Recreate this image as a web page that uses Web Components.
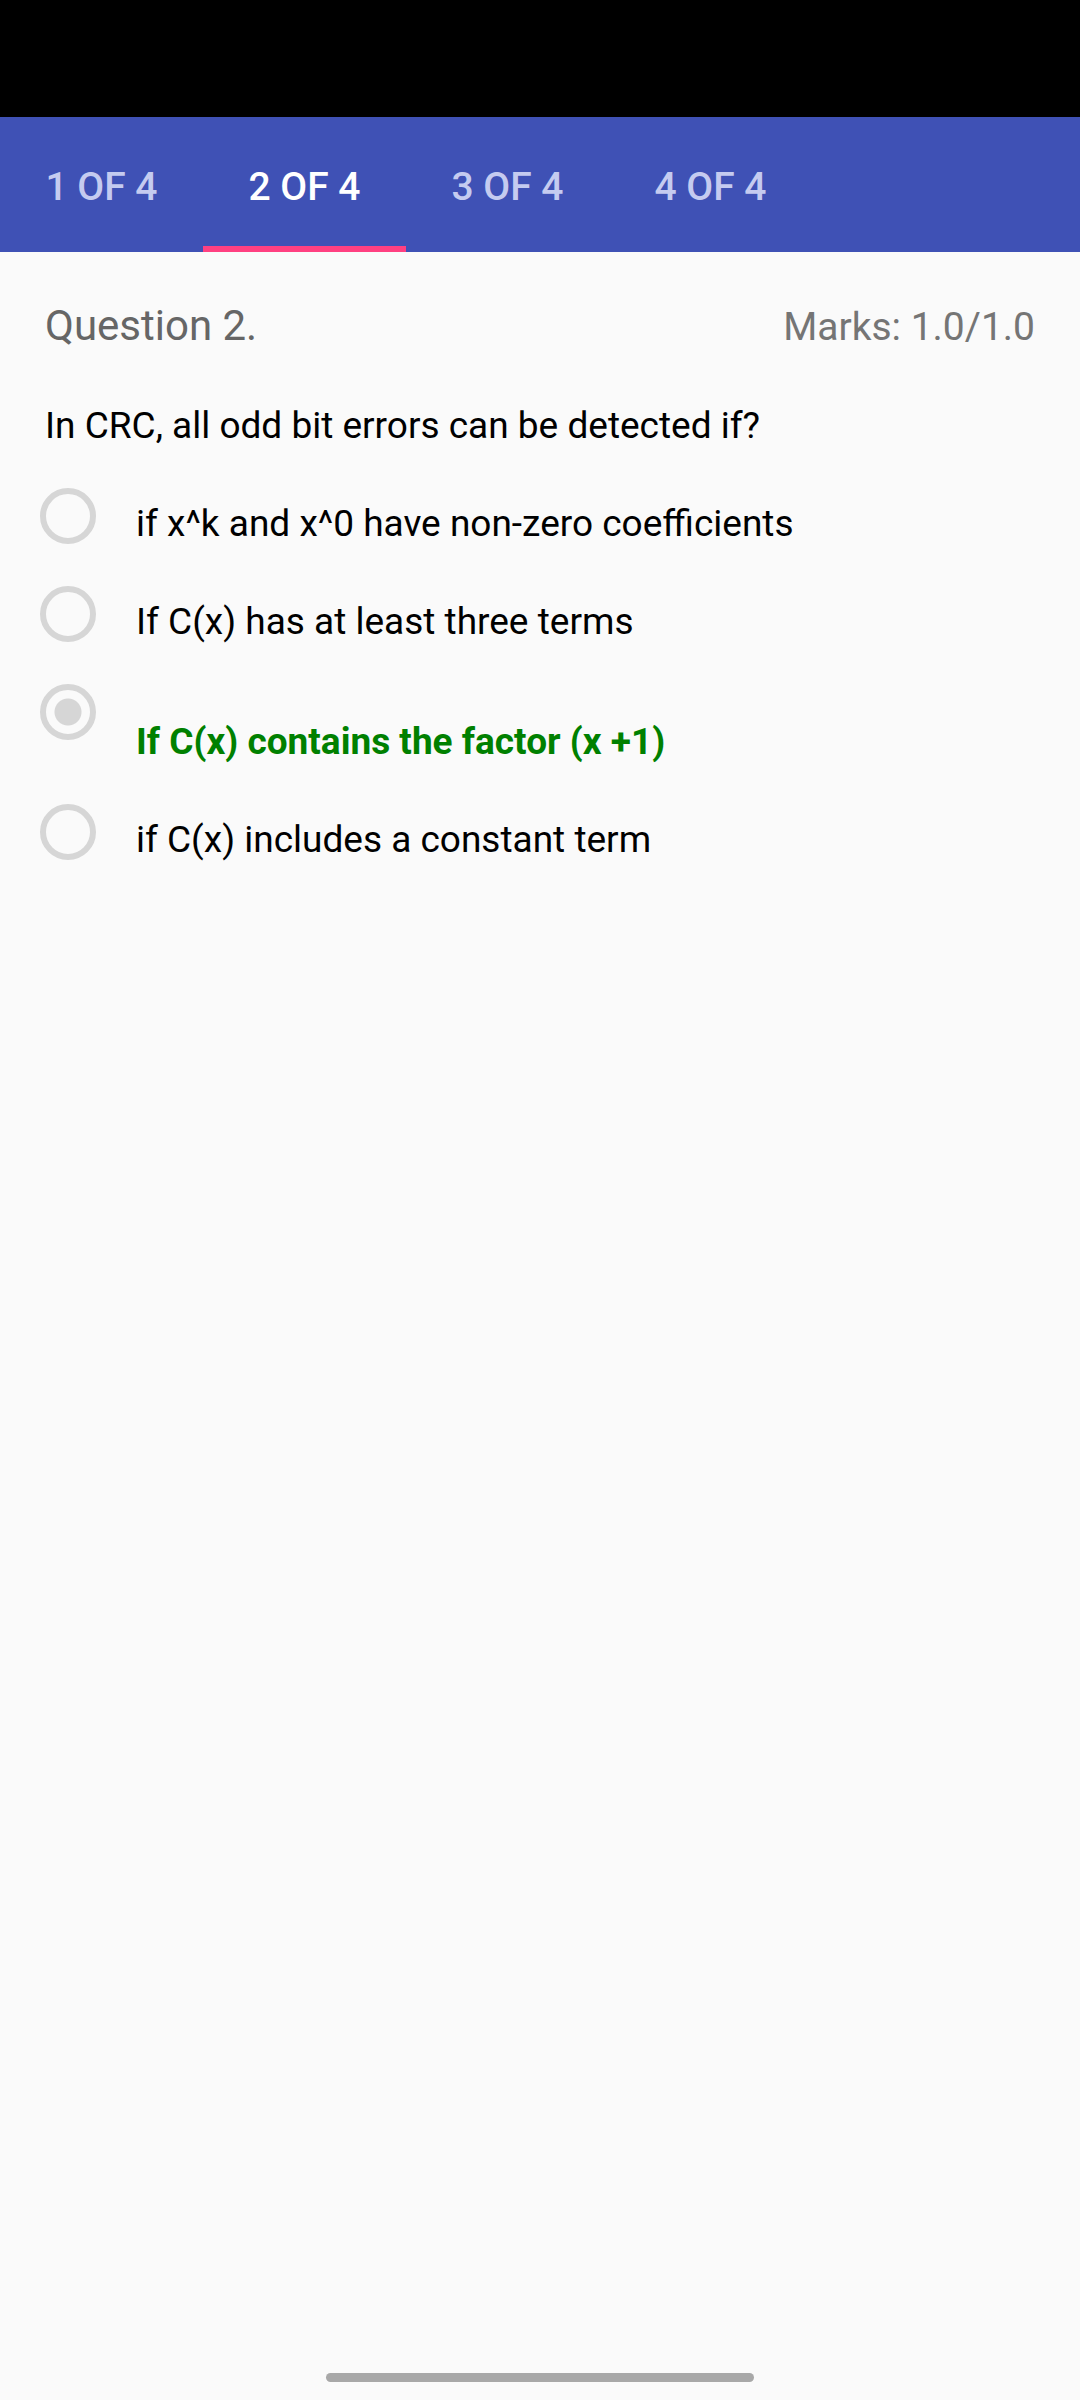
<!DOCTYPE html>
<html lang="en">
<head>
<meta charset="utf-8">
<meta name="viewport" content="width=device-width, initial-scale=1">
<title>Quiz review</title>
<style>
  body { margin: 0; background: #fafafa; font-family: Roboto, sans-serif; }
</style>
</head>
<body>
<quiz-screen>
  <quiz-tabs slot="tabs">
    <quiz-tab>1 OF 4</quiz-tab>
    <quiz-tab selected>2 OF 4</quiz-tab>
    <quiz-tab>3 OF 4</quiz-tab>
    <quiz-tab>4 OF 4</quiz-tab>
  </quiz-tabs>
  <quiz-question>
    <span slot="title">Question 2.</span>
    <span slot="marks">Marks: 1.0/1.0</span>
    <span slot="text">In CRC, all odd bit errors can be detected if?</span>
    <quiz-option>if x^k and x^0 have non-zero coefficients</quiz-option>
    <quiz-option>If C(x) has at least three terms</quiz-option>
    <quiz-option checked correct>If C(x) contains the factor (x +1)</quiz-option>
    <quiz-option>if C(x) includes a constant term</quiz-option>
  </quiz-question>
</quiz-screen>
<script>
  function define(name, html, setup) {
    const template = document.createElement('template');
    template.innerHTML = html;
    customElements.define(name, class extends HTMLElement {
      constructor() {
        super();
        this.attachShadow({ mode: 'open' }).append(template.content.cloneNode(true));
      }
      connectedCallback() {
        if (setup) setup(this, this.shadowRoot);
      }
    });
  }

  // Screen frame: status bar, tabs, page content, gesture bar
  define('quiz-screen', `
    <style>
      :host { display: flex; flex-direction: column; min-height: 100vh; background: #fafafa; }
      .status { height: 117px; background: #000; }
      main { flex: 1; }
      footer { display: flex; justify-content: center; padding: 18px 0; }
      .pill { width: 428px; height: 9px; border-radius: 5px; background: #a8a8a8; }
    </style>
    <div class="status"></div>
    <slot name="tabs"></slot>
    <main><slot></slot></main>
    <footer><div class="pill"></div></footer>`);

  define('quiz-tabs', `
    <style>
      :host { display: block; background: #3f51b5; }
      nav { display: flex; height: 135px; }
    </style>
    <nav role="tablist"><slot></slot></nav>`);

  define('quiz-tab', `
    <style>
      :host { display: flex; }
      button {
        box-sizing: border-box; min-width: 203px; margin: 0; padding: 10px 45px 0;
        border: 0; border-bottom: 6px solid transparent; background: none;
        color: #c5cbf0; font: 500 39px/46px Roboto, sans-serif; white-space: nowrap;
      }
      :host([selected]) button { color: #fff; border-bottom-color: #ff4081; }
    </style>
    <button type="button" role="tab"><slot></slot></button>`,
    (host, root) => root.querySelector('button')
      .setAttribute('aria-selected', host.hasAttribute('selected')));

  define('quiz-question', `
    <style>
      :host { display: block; padding: 49px 45px 0; }
      header { display: flex; justify-content: space-between; align-items: baseline; }
      h1, p { margin: 0; font-weight: 400; }
      h1 { font-size: 42px; line-height: 50px; color: #666; }
      .marks { font-size: 39px; line-height: 46px; color: #757575; }
      .text { margin-top: 52px; font-size: 37px; line-height: 46px; color: #000; }
      .options { margin: 39px 0 0 -5px; }
    </style>
    <header>
      <h1><slot name="title"></slot></h1>
      <p class="marks"><slot name="marks"></slot></p>
    </header>
    <p class="text"><slot name="text"></slot></p>
    <div class="options" role="radiogroup"><slot></slot></div>`);

  define('quiz-option', `
    <style>
      :host { display: block; padding-bottom: 39px; font-size: 37px; line-height: 46px; color: #000; }
      label { display: flex; align-items: flex-start; gap: 40px; }
      input {
        appearance: none; box-sizing: border-box; flex: none; width: 56px; height: 56px;
        margin: 0; border: 6px solid #d6d6d6; border-radius: 50%;
      }
      input:checked { background: radial-gradient(circle, #d6d6d6 13px, transparent 14px); }
      span { padding-top: 13px; }
      :host([correct]) span { padding-top: 35px; color: #008000; font-weight: 700; }
    </style>
    <label><input type="radio"><span><slot></slot></span></label>`,
    (host, root) => {
      root.querySelector('input').checked = host.hasAttribute('checked');
    });
</script>
</body>
</html>
